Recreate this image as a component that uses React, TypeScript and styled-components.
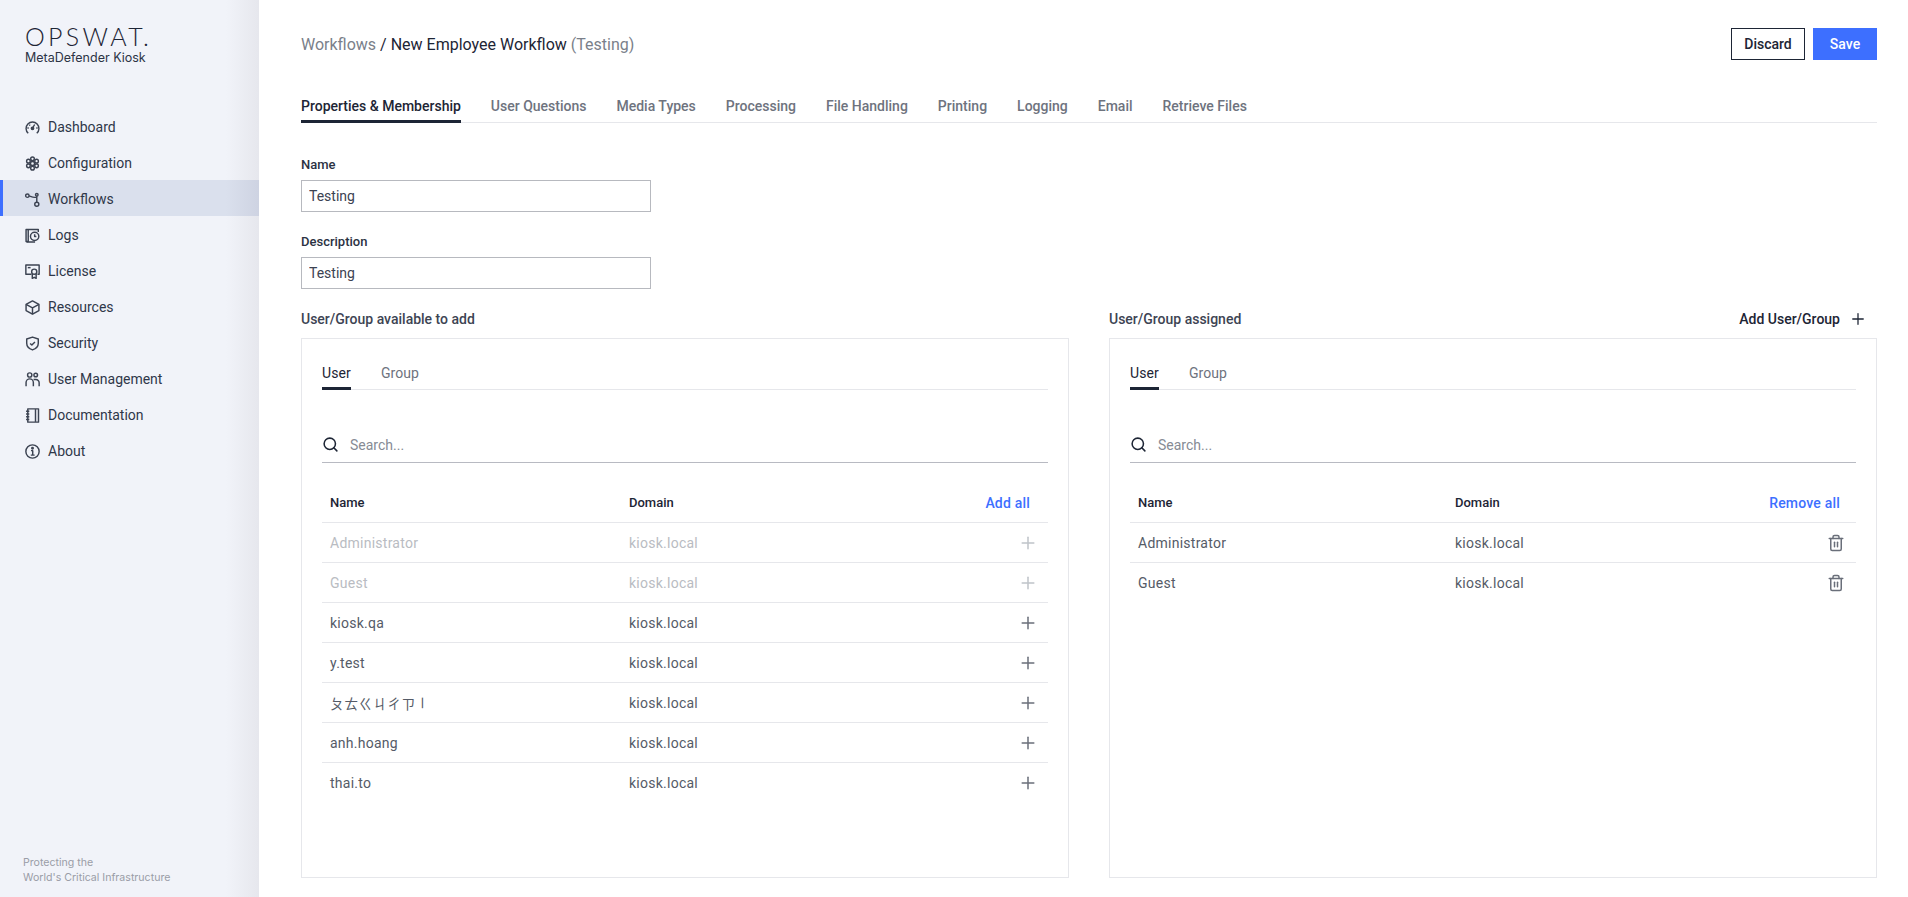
import React from 'react';
import styled, { createGlobalStyle } from 'styled-components';
import { Plus, Search, Trash2 } from 'lucide-react';

const GlobalStyle = createGlobalStyle`
  html, body {
    margin: 0;
    padding: 0;
    height: 100%;
    overflow: hidden;
    background: #fff;
    font-family: Roboto, "Noto Sans CJK TC", sans-serif;
    color: #1d2535;
  }
  #root { height: 100%; }
  * { box-sizing: border-box; }
`;

const Layout = styled.div`
  display: flex;
  width: 1908px;
  height: 897px;
`;

const Sidebar = styled.aside`
  width: 259px;
  flex: none;
  display: flex;
  flex-direction: column;
  background: linear-gradient(90deg, #f1f3f9 0, #f1f3f9 226px, #e6e7ed 259px);
`;

const Brand = styled.div`
  padding: 22px 0 0 25px;
  height: 108px;
`;

const LogoWord = styled.div`
  font-family: Lato, sans-serif;
  font-weight: 300;
  font-size: 25px;
  line-height: 28px;
  letter-spacing: 3.3px;
  color: #1d2535;
`;

const LogoDot = styled.span`
  margin-left: -3px;
`;

const Product = styled.div`
  font-family: Inter, sans-serif;
  font-size: 12.5px;
  line-height: 16px;
  color: #2c3445;
`;

const Nav = styled.nav`
  display: flex;
  flex-direction: column;
`;

const NavItem = styled.a<{ $active?: boolean }>`
  display: flex;
  align-items: center;
  gap: 8px;
  height: 36px;
  padding-top: 2px;
  padding-left: ${(p) => (p.$active ? '22px' : '25px')};
  border-left: ${(p) => (p.$active ? '3px solid #3d6fff' : 'none')};
  background: ${(p) =>
    p.$active ? 'linear-gradient(90deg, #dae0ed 0, #dae0ed 223px, #ced3e2 256px)' : 'transparent'};
  font-size: 14px;
  color: #2f3749;
  svg {
    width: 15px;
    height: 15px;
    flex: none;
    fill: none;
    stroke: #3c4352;
    stroke-width: 1.35;
    stroke-linejoin: round;
  }
`;

const Tagline = styled.div`
  margin-top: auto;
  padding: 0 0 12px 23px;
  font-family: Inter, sans-serif;
  font-size: 10.6px;
  line-height: 15px;
  color: #9a9da7;
`;

const Main = styled.main`
  flex: 1;
  min-width: 0;
  padding: 28px 31px 0 42px;
`;

const Header = styled.header`
  display: flex;
  justify-content: space-between;
  align-items: center;
  height: 32px;
`;

const Crumbs = styled.h1`
  margin: 0;
  font-size: 16px;
  font-weight: 400;
  color: #1d2535;
`;

const Muted = styled.span`
  color: #7a7f8a;
`;

const Actions = styled.div`
  display: flex;
  gap: 8px;
`;

const Button = styled.button<{ $primary?: boolean }>`
  height: 32px;
  padding: 0;
  width: ${(p) => (p.$primary ? '64px' : '74px')};
  font-family: Roboto, sans-serif;
  font-size: 14px;
  font-weight: 500;
  background: ${(p) => (p.$primary ? '#3d6fff' : '#fff')};
  color: ${(p) => (p.$primary ? '#fff' : '#1d2535')};
  border: ${(p) => (p.$primary ? 'none' : '1px solid #1d2535')};
`;

const Tabs = styled.div`
  display: flex;
  gap: 30px;
  height: 31px;
  border-bottom: 1px solid #e6e7eb;
`;

const Tab = styled.div<{ $active?: boolean; $small?: boolean }>`
  height: 31px;
  font-size: 14px;
  line-height: 28px;
  font-weight: ${(p) => (p.$small ? 400 : 500)};
  letter-spacing: ${(p) => (p.$small ? '0.1px' : '0')};
  color: ${(p) => (p.$active ? '#1d2535' : '#6e737e')};
  border-bottom: ${(p) => (p.$active ? '3px solid #1d2535' : 'none')};
`;

const PageTabs = styled(Tabs)`
  margin-top: 32px;
`;

const Field = styled.div<{ $first?: boolean }>`
  margin-top: ${(p) => (p.$first ? '34px' : '22px')};
  width: 350px;
`;

const FieldLabel = styled.label`
  display: block;
  font-size: 13px;
  line-height: 16px;
  font-weight: 500;
  color: #2b3243;
  margin-bottom: 7px;
`;

const TextInput = styled.input`
  display: block;
  width: 100%;
  height: 32px;
  padding: 0 7px;
  border: 1px solid #b7b9bf;
  border-radius: 0;
  font-family: Roboto, sans-serif;
  font-size: 14px;
  color: #3b4252;
  outline: none;
`;

const Columns = styled.div`
  display: grid;
  grid-template-columns: 768px 768px;
  gap: 40px;
  margin-top: 17px;
`;

const Column = styled.section`
  display: flex;
  flex-direction: column;
`;

const ColumnHead = styled.div`
  display: flex;
  justify-content: space-between;
  align-items: center;
  height: 26px;
  margin-bottom: 6px;
`;

const ColumnTitle = styled.div`
  font-size: 14px;
  font-weight: 500;
  color: #3d4453;
`;

const AddLink = styled.div`
  display: flex;
  align-items: center;
  gap: 9px;
  padding-right: 10px;
  font-size: 14px;
  font-weight: 500;
  color: #1d2535;
  svg {
    width: 18px;
    height: 18px;
    stroke-width: 1.7;
  }
`;

const Panel = styled.div`
  height: 540px;
  border: 1px solid #e6e7eb;
  padding: 20px;
`;

const SearchBar = styled.div`
  display: flex;
  align-items: center;
  gap: 11px;
  height: 37px;
  margin-top: 36px;
  padding-top: 1px;
  border-bottom: 1px solid #b8bac2;
  font-size: 14px;
  color: #868b95;
  svg {
    width: 17px;
    height: 17px;
    color: #1d2535;
    stroke-width: 2.2;
  }
`;

const Table = styled.div`
  margin-top: 20px;
`;

const TableRow = styled.div<{ $domainCol: number; $head?: boolean; $off?: boolean }>`
  display: grid;
  grid-template-columns: ${(p) => p.$domainCol}px 1fr 60px;
  align-items: center;
  height: 40px;
  padding: 0 8px;
  border-bottom: 1px solid #e6e7eb;
  font-size: ${(p) => (p.$head ? '13px' : '14px')};
  font-weight: ${(p) => (p.$head ? 500 : 400)};
  letter-spacing: ${(p) => (p.$head ? '0' : '0.25px')};
  color: ${(p) => (p.$head ? '#1d2535' : p.$off ? '#b9bcc2' : '#555b67')};
  &:last-child {
    border-bottom: none;
  }
`;

const HeadAction = styled.div<{ $inset: number }>`
  justify-self: end;
  white-space: nowrap;
  font-size: 14px;
  letter-spacing: 0.2px;
  color: #3d6fff;
  padding-right: ${(p) => p.$inset}px;
`;

const RowIcon = styled.div<{ $off?: boolean }>`
  justify-self: end;
  display: flex;
  align-items: center;
  justify-content: center;
  width: 20px;
  height: 20px;
  margin-right: 2px;
  color: ${(p) => (p.$off ? '#bfc3c9' : '#6a6f7a')};
`;

const RotatedGlyph = styled.span`
  display: inline-block;
  transform: rotate(90deg);
`;

const DashboardIcon = () => (
  <svg viewBox="0 0 14 14">
    <path d="M3 12.4A6 6 0 1 1 11 12.4" />
    <circle cx="7" cy="7.8" r="1.1" fill="#3c4352" />
    <path d="M7.4 7L9 4.2M2.2 7.4h1.3M10.5 7.4h1.3M4 4.4l.8.8" />
  </svg>
);

const GearIcon = () => (
  <svg viewBox="0 0 14 14">
    <circle cx="7" cy="7" r="1.9" />
    <circle cx="7" cy="2.6" r="1.7" />
    <circle cx="7" cy="11.4" r="1.7" />
    <circle cx="3.2" cy="4.8" r="1.7" />
    <circle cx="10.8" cy="4.8" r="1.7" />
    <circle cx="3.2" cy="9.2" r="1.7" />
    <circle cx="10.8" cy="9.2" r="1.7" />
  </svg>
);

const WorkflowIcon = () => (
  <svg viewBox="0 0 14 14">
    <circle cx="2.2" cy="3.4" r="1.6" />
    <circle cx="11" cy="2.6" r="1.2" />
    <circle cx="11" cy="11.4" r="1.9" />
    <path d="M3.8 3.6C6 4.4 7 5 9 5h2M11 3.8v5.7" />
  </svg>
);

const LogsIcon = () => (
  <svg viewBox="0 0 14 14">
    <path d="M3 12.6H1V1.4h11.4V3.8" />
    <path d="M3 12.6V1.6M1.4 13h8" />
    <circle cx="9" cy="7.8" r="3.9" />
    <path d="M9 5.8v2.2h1.6" />
  </svg>
);

const LicenseIcon = () => (
  <svg viewBox="0 0 14 14">
    <path d="M6 9.6H.8V1h12.4v8.6h-1.6" />
    <path d="M2.6 3.4h2.6" />
    <circle cx="8.6" cy="7.2" r="2.4" />
    <path d="M6.8 9v4.4l1.8-1 1.8 1V9" />
  </svg>
);

const BoxIcon = () => (
  <svg viewBox="0 0 14 14">
    <path d="M7 .8l6 3.3v5.8L7 13.2 1 9.9V4.1z" />
    <path d="M1 4.1l6 3.2 6-3.2M7 7.3v5.9" />
  </svg>
);

const ShieldIcon = () => (
  <svg viewBox="0 0 14 14">
    <path d="M7 1l5.4 1.8v4c0 3-2.4 5.2-5.4 6.2-3-1-5.4-3.2-5.4-6.2v-4z" />
    <path d="M4.8 6.9l1.6 1.6 2.9-2.9" />
  </svg>
);

const UsersIcon = () => (
  <svg viewBox="0 0 14 14">
    <circle cx="4.4" cy="2.8" r="2" />
    <circle cx="10" cy="2.8" r="1.7" />
    <path d="M1 13.4V9.8a3.4 3.4 0 0 1 6.8 0v3.6" />
    <path d="M8 7h2.2a3 3 0 0 1 3 3v3.4" />
  </svg>
);

const NotebookIcon = () => (
  <svg viewBox="0 0 14 14">
    <path d="M2.6.8h10v12.4h-10z" />
    <path d="M9.8 1v12" />
    <path d="M1 3h3M1 5.6h3M1 8.2h3M1 10.8h3" />
  </svg>
);

const InfoIcon = () => (
  <svg viewBox="0 0 14 14">
    <circle cx="7" cy="7" r="6.2" />
    <path d="M5.6 6.2H7.2V10.4M5.4 10.4h3.6" />
    <circle cx="7" cy="3.9" r=".7" fill="#3c4352" />
  </svg>
);

const navItems = [
  { label: 'Dashboard', icon: <DashboardIcon /> },
  { label: 'Configuration', icon: <GearIcon /> },
  { label: 'Workflows', icon: <WorkflowIcon />, active: true },
  { label: 'Logs', icon: <LogsIcon /> },
  { label: 'License', icon: <LicenseIcon /> },
  { label: 'Resources', icon: <BoxIcon /> },
  { label: 'Security', icon: <ShieldIcon /> },
  { label: 'User Management', icon: <UsersIcon /> },
  { label: 'Documentation', icon: <NotebookIcon /> },
  { label: 'About', icon: <InfoIcon /> },
];

const pageTabs = [
  'Properties & Membership',
  'User Questions',
  'Media Types',
  'Processing',
  'File Handling',
  'Printing',
  'Logging',
  'Email',
  'Retrieve Files',
];

interface PanelUser {
  id: string;
  name: React.ReactNode;
  off?: boolean;
}

const availableUsers: PanelUser[] = [
  { id: 'admin', name: 'Administrator', off: true },
  { id: 'guest', name: 'Guest', off: true },
  { id: 'qa', name: 'kiosk.qa' },
  { id: 'ytest', name: 'y.test' },
  {
    id: 'bopomofo',
    name: (
      <>
        ㄆㄊㄍㄐㄔㄗ<RotatedGlyph>ㄧ</RotatedGlyph>
      </>
    ),
  },
  { id: 'anh', name: 'anh.hoang' },
  { id: 'thai', name: 'thai.to' },
];

const assignedUsers: PanelUser[] = [
  { id: 'admin', name: 'Administrator' },
  { id: 'guest', name: 'Guest' },
];

interface UserPanelProps {
  users: PanelUser[];
  action: string;
  actionInset: number;
  domainCol: number;
  icon: React.ReactNode;
}

const UserPanel: React.FC<UserPanelProps> = ({ users, action, actionInset, domainCol, icon }) => (
  <Panel>
    <Tabs>
      <Tab $active $small>
        User
      </Tab>
      <Tab $small>Group</Tab>
    </Tabs>
    <SearchBar>
      <Search />
      Search...
    </SearchBar>
    <Table>
      <TableRow $head $domainCol={domainCol}>
        <div>Name</div>
        <div>Domain</div>
        <HeadAction $inset={actionInset}>{action}</HeadAction>
      </TableRow>
      {users.map((user) => (
        <TableRow key={user.id} $domainCol={domainCol} $off={user.off}>
          <div>{user.name}</div>
          <div>kiosk.local</div>
          <RowIcon $off={user.off}>{icon}</RowIcon>
        </TableRow>
      ))}
    </Table>
  </Panel>
);

const App: React.FC = () => {
  return (
    <>
      <GlobalStyle />
      <Layout>
        <Sidebar>
          <Brand>
            <LogoWord>
              OPSWAT<LogoDot>.</LogoDot>
            </LogoWord>
            <Product>MetaDefender Kiosk</Product>
          </Brand>
          <Nav>
            {navItems.map((item) => (
              <NavItem key={item.label} $active={item.active}>
                {item.icon}
                {item.label}
              </NavItem>
            ))}
          </Nav>
          <Tagline>
            Protecting the
            <br />
            World's Critical Infrastructure
          </Tagline>
        </Sidebar>
        <Main>
          <Header>
            <Crumbs>
              <Muted>Workflows</Muted> / New Employee Workflow <Muted>(Testing)</Muted>
            </Crumbs>
            <Actions>
              <Button>Discard</Button>
              <Button $primary>Save</Button>
            </Actions>
          </Header>
          <PageTabs>
            {pageTabs.map((tab, index) => (
              <Tab key={tab} $active={index === 0}>
                {tab}
              </Tab>
            ))}
          </PageTabs>
          <Field $first>
            <FieldLabel>Name</FieldLabel>
            <TextInput defaultValue="Testing" />
          </Field>
          <Field>
            <FieldLabel>Description</FieldLabel>
            <TextInput defaultValue="Testing" />
          </Field>
          <Columns>
            <Column>
              <ColumnHead>
                <ColumnTitle>User/Group available to add</ColumnTitle>
              </ColumnHead>
              <UserPanel
                users={availableUsers}
                action="Add all"
                actionInset={10}
                domainCol={299}
                icon={<Plus size={20} strokeWidth={1.8} />}
              />
            </Column>
            <Column>
              <ColumnHead>
                <ColumnTitle>User/Group assigned</ColumnTitle>
                <AddLink>
                  Add User/Group
                  <Plus />
                </AddLink>
              </ColumnHead>
              <UserPanel
                users={assignedUsers}
                action="Remove all"
                actionInset={8}
                domainCol={317}
                icon={<Trash2 size={18} strokeWidth={2} />}
              />
            </Column>
          </Columns>
        </Main>
      </Layout>
    </>
  );
};

export default App;
